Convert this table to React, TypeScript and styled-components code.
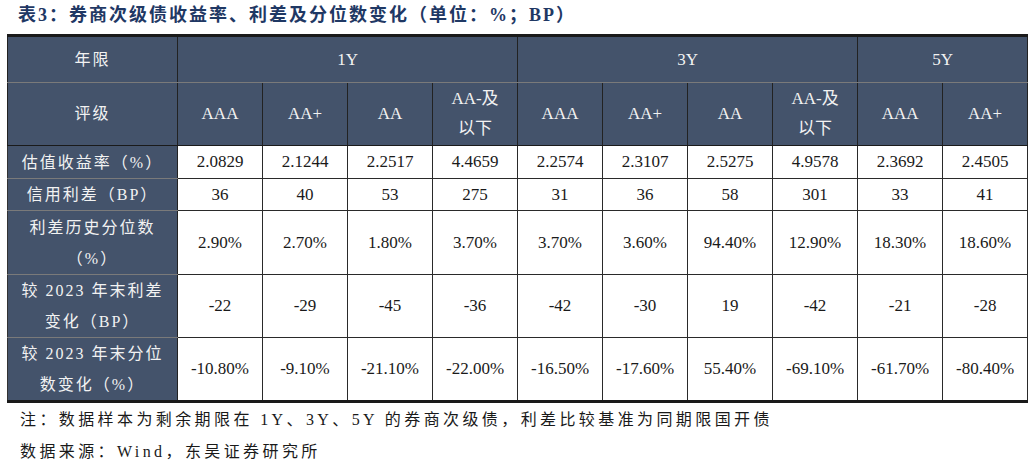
import styled, { createGlobalStyle } from "styled-components";

const GlobalStyle = createGlobalStyle`
  body {
    margin: 0;
    background: #ffffff;
    font-family: "Liberation Serif", "Noto Sans CJK SC", serif;
  }
`;

const ratings = ["AAA", "AA+", "AA", "AA-及\n以下"];

const rows = [
  {
    label: "估值收益率（%）",
    values: ["2.0829", "2.1244", "2.2517", "4.4659", "2.2574", "2.3107", "2.5275", "4.9578", "2.3692", "2.4505"],
    h: 33,
  },
  {
    label: "信用利差（BP）",
    values: ["36", "40", "53", "275", "31", "36", "58", "301", "33", "41"],
    h: 32,
  },
  {
    label: "利差历史分位数\n（%）",
    values: ["2.90%", "2.70%", "1.80%", "3.70%", "3.70%", "3.60%", "94.40%", "12.90%", "18.30%", "18.60%"],
    h: 64,
  },
  {
    label: "较 2023 年末利差\n变化（BP）",
    values: ["-22", "-29", "-45", "-36", "-42", "-30", "19", "-42", "-21", "-28"],
    h: 63,
  },
  {
    label: "较 2023 年末分位\n数变化（%）",
    values: ["-10.80%", "-9.10%", "-21.10%", "-22.00%", "-16.50%", "-17.60%", "55.40%", "-69.10%", "-61.70%", "-80.40%"],
    h: 62,
  },
];

function App() {
  return (
    <Page>
      <GlobalStyle />
      <Title>表3：券商次级债收益率、利差及分位数变化（单位：%；BP）</Title>
      <Table>
        <colgroup>
          <col style={{ width: 170 }} />
          {Array.from({ length: 10 }).map((_, i) => (
            <col key={i} style={{ width: 85 }} />
          ))}
        </colgroup>
        <thead>
          <tr style={{ height: 47 }}>
            <HeadLabel>年限</HeadLabel>
            <Head colSpan={4}>1Y</Head>
            <Head colSpan={4}>3Y</Head>
            <Head colSpan={2}>5Y</Head>
          </tr>
          <tr style={{ height: 63 }}>
            <HeadLabel $sub>评级</HeadLabel>
            {[...ratings, ...ratings, ratings[0], ratings[1]].map((r, i) => (
              <Head key={i} $sub>
                {r}
              </Head>
            ))}
          </tr>
        </thead>
        <tbody>
          {rows.map((row, i) => (
            <tr key={i} style={{ height: row.h }}>
              <RowLabel $last={i === rows.length - 1}>{row.label}</RowLabel>
              {row.values.map((v, j) => (
                <Cell key={j}>{v}</Cell>
              ))}
            </tr>
          ))}
        </tbody>
      </Table>
      <Notes>
        <Note>注：数据样本为剩余期限在 1Y、3Y、5Y 的券商次级债，利差比较基准为同期限国开债</Note>
        <Note>数据来源：Wind，东吴证券研究所</Note>
      </Notes>
    </Page>
  );
}

const Page = styled.div`
  width: 1034px;
  height: 466px;
  overflow: hidden;
`;

const Title = styled.div`
  height: 34px;
  padding-left: 18px;
  padding-top: 1px;
  box-sizing: border-box;
  font-size: 18px;
  line-height: 28px;
  font-weight: bold;
  letter-spacing: 2px;
  color: #1f3864;
  white-space: nowrap;
`;

const Table = styled.table`
  margin-left: 7px;
  width: 1021px;
  table-layout: fixed;
  border-collapse: collapse;
  border-top: 3px solid #1a1a1a;
  border-bottom: 3px solid #1a1a1a;
  border-left: 1px solid #333;
  border-right: 1px solid #333;
  font-size: 17px;
`;

const Head = styled.th<{ $sub?: boolean }>`
  background: #44536b;
  color: #f2f2f2;
  font-weight: normal;
  text-align: center;
  white-space: pre-line;
  line-height: 30px;
  padding: 0;
  border-left: 1px solid #222;
  border-right: 1px solid #222;
  border-bottom: 1px solid ${(p) => (p.$sub ? "#1a1a1a" : "#7a7a7a")};
`;

const HeadLabel = styled(Head)`
  font-size: 16px;
  letter-spacing: 2px;
`;

const RowLabel = styled.td<{ $last?: boolean }>`
  background: #44536b;
  color: #f2f2f2;
  text-align: center;
  white-space: pre-line;
  font-size: 16px;
  letter-spacing: 2px;
  line-height: 31px;
  padding: 0;
  border-right: 1px solid #222;
  border-bottom: 1px solid ${(p) => (p.$last ? "#1a1a1a" : "#7a7a7a")};
`;

const Cell = styled.td`
  color: #1a1a1a;
  text-align: center;
  padding: 0;
  line-height: 30px;
  border: 1px solid #2a2a2a;
`;

const Notes = styled.div`
  padding-left: 20px;
  padding-top: 1px;
`;

const Note = styled.div`
  font-size: 16px;
  line-height: 32px;
  letter-spacing: 3.4px;
  color: #1a1a1a;
  white-space: nowrap;
`;

export default App;
